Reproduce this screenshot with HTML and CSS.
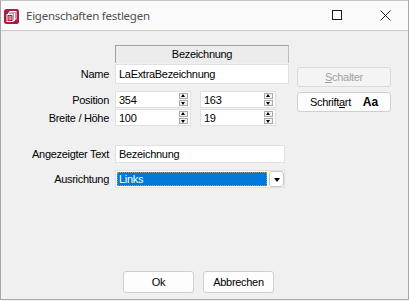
FILE: index.html
```html
<!DOCTYPE html>
<html lang="de">

<head>
    <meta charset="UTF-8">
    <meta name="viewport" content="width=device-width, initial-scale=1.0">
    <title>Eigenschaften festlegen</title>
    <link rel="stylesheet" href="styles.css">
</head>

<body>
    <div class="window">
        <div class="titlebar">
            <svg class="app-icon" width="15" height="15" viewBox="0 0 15 15">
                <rect x="0" y="0" width="15" height="15" rx="2.5" fill="#a51f45"/>
                <rect x="6" y="2.5" width="6" height="7.5" fill="none" stroke="#fff" stroke-width="1"/>
                <rect x="4.5" y="4" width="6" height="7.5" fill="#a51f45" stroke="#fff" stroke-width="1"/>
                <rect x="3" y="5.5" width="6" height="7" fill="#a51f45" stroke="#fff" stroke-width="1"/>
                <line x1="4.5" y1="8" x2="7.5" y2="8" stroke="#fff" stroke-width="1"/>
                <line x1="4.5" y1="10" x2="7.5" y2="10" stroke="#fff" stroke-width="1"/>
            </svg>
            <span class="title">Eigenschaften festlegen</span>
            <div class="caption-buttons">
                <svg class="cap-btn" width="11" height="11" viewBox="0 0 11 11">
                    <rect x="0.5" y="0.5" width="9" height="9" fill="none" stroke="#1a1a1a" stroke-width="1"/>
                </svg>
                <svg class="cap-btn" width="11" height="11" viewBox="0 0 11 11">
                    <path d="M0.5 0.5 L10.5 10.5 M10.5 0.5 L0.5 10.5" stroke="#1a1a1a" stroke-width="1"/>
                </svg>
            </div>
        </div>

        <div class="content">
            <div class="fields">
                <div class="row row-header">
                    <span class="label"></span>
                    <div class="col-header">Bezeichnung</div>
                </div>
                <div class="row row-name">
                    <span class="label">Name</span>
                    <div class="textbox wide">LaExtraBezeichnung</div>
                </div>
                <div class="row row-spin first">
                    <span class="label">Position</span>
                    <div class="spin">
                        <span class="spin-value">354</span>
                        <span class="spin-arrows"><i class="up"></i><i class="down"></i></span>
                    </div>
                    <div class="spin">
                        <span class="spin-value">163</span>
                        <span class="spin-arrows"><i class="up"></i><i class="down"></i></span>
                    </div>
                </div>
                <div class="row row-spin">
                    <span class="label">Breite / Höhe</span>
                    <div class="spin">
                        <span class="spin-value">100</span>
                        <span class="spin-arrows"><i class="up"></i><i class="down"></i></span>
                    </div>
                    <div class="spin">
                        <span class="spin-value">19</span>
                        <span class="spin-arrows"><i class="up"></i><i class="down"></i></span>
                    </div>
                </div>
                <div class="row row-text">
                    <span class="label">Angezeigter Text</span>
                    <div class="textbox narrow">Bezeichnung</div>
                </div>
                <div class="row row-combo">
                    <span class="label">Ausrichtung</span>
                    <div class="combo">
                        <span class="combo-value">Links</span>
                        <span class="combo-btn"><i></i></span>
                    </div>
                </div>
            </div>

            <div class="side">
                <button class="btn disabled"><u>S</u>chalter</button>
                <button class="btn font-btn">Schrift<u>a</u>rt <b>Aa</b></button>
            </div>
        </div>

        <div class="footer">
            <button class="btn dlg">Ok</button>
            <button class="btn dlg">Abbrechen</button>
        </div>
    </div>
</body>

</html>
```

FILE: styles.css
```css
html, body {
    margin: 0;
    padding: 0;
}

body {
    width: 409px;
    height: 301px;
    background-color: #f0f0f0;
    font-family: "Liberation Sans", Arial, sans-serif;
    font-size: 11px;
    letter-spacing: -0.3px;
    color: #000;
}

.window {
    box-sizing: border-box;
    width: 409px;
    height: 300px;
    border: 1px solid #a8a8a8;
    border-top-color: #c4c4c4;
    display: flex;
    flex-direction: column;
}

/* title bar */
.titlebar {
    height: 29px;
    background-color: #fafafa;
    border-bottom: 1px solid #c8c8c8;
    display: flex;
    align-items: center;
    flex-shrink: 0;
}

.app-icon {
    margin-left: 3px;
    margin-top: 1px;
}

.title {
    margin-left: 7px;
    font-family: "Noto Sans", "Open Sans", sans-serif;
    font-size: 11.5px;
    letter-spacing: -0.25px;
    color: #505050;
}

.caption-buttons {
    margin-left: auto;
    display: flex;
    align-items: center;
    gap: 37px;
    margin-right: 17px;
}

/* form area */
.content {
    display: flex;
    padding: 14px 0 0 8px;
}

.fields {
    display: flex;
    flex-direction: column;
}

.row {
    display: flex;
    align-items: center;
}

.label {
    width: 100px;
    margin-right: 6px;
    text-align: right;
    white-space: nowrap;
}

.col-header {
    box-sizing: border-box;
    width: 174px;
    height: 18px;
    background-color: #ececec;
    border: 1px solid #a0a0a0;
    border-bottom: none;
    border-right-color: #bdbdbd;
    text-align: center;
    line-height: 17px;
}

.textbox {
    box-sizing: border-box;
    background-color: #fff;
    border: 1px solid #e0e0e0;
    padding-left: 3px;
    white-space: nowrap;
}

.row-name {
    margin-top: 1px;
}

.textbox.wide {
    width: 174px;
    height: 20px;
    line-height: 18px;
}

.row-spin {
    margin-top: 1px;
}

.row-spin.first {
    margin-top: 7px;
}

.spin {
    box-sizing: border-box;
    width: 76px;
    height: 17px;
    background-color: #fff;
    border: 1px solid #e0e0e0;
    display: flex;
    align-items: center;
    padding-left: 3px;
    margin-right: 9px;
}

.spin-value {
    flex: 1;
}

.spin-arrows {
    display: flex;
    flex-direction: column;
    gap: 1px;
    margin-right: 2px;
}

.spin-arrows i {
    box-sizing: border-box;
    width: 9px;
    height: 6px;
    background-color: #f4f4f4;
    border: 1px solid #a9a9a9;
    position: relative;
}

.spin-arrows i::after {
    content: "";
    position: absolute;
    left: 1px;
    border-left: 2.5px solid transparent;
    border-right: 2.5px solid transparent;
}

.spin-arrows .up::after {
    top: 0;
    border-bottom: 3px solid #000;
}

.spin-arrows .down::after {
    top: 1px;
    border-top: 3px solid #000;
}

.row-text {
    margin-top: 19px;
}

.textbox.narrow {
    width: 170px;
    height: 18px;
    line-height: 16px;
}

.row-combo {
    margin-top: 7px;
}

.combo {
    box-sizing: border-box;
    width: 170px;
    height: 18px;
    background-color: #fff;
    border: 1px solid #e0e0e0;
    display: flex;
    align-items: stretch;
}

.combo-value {
    flex: 1;
    margin: 1px;
    background-color: #0078d7;
    color: #fff;
    outline: 1px dotted #e08a1e;
    outline-offset: -1px;
    padding-left: 2px;
    line-height: 14px;
}

.combo-btn {
    box-sizing: border-box;
    width: 15px;
    margin-left: 1px;
    background-color: #fff;
    border: 1px solid #c8c8c8;
    border-radius: 3px;
    display: flex;
    align-items: center;
    justify-content: center;
}

.combo-btn i {
    border-left: 3.5px solid transparent;
    border-right: 3.5px solid transparent;
    border-top: 4px solid #000;
    margin-top: 1px;
}

/* buttons */
.btn {
    box-sizing: border-box;
    font-family: "Liberation Sans", Arial, sans-serif;
    font-size: 11px;
    letter-spacing: -0.3px;
    color: #000;
    background-color: #fdfdfd;
    border: 1px solid #cfcfcf;
    border-radius: 3px;
    padding: 0;
    height: 20px;
}

.side {
    display: flex;
    flex-direction: column;
    gap: 5px;
    margin-left: 8px;
    margin-top: 22px;
}

.side .btn {
    width: 94px;
}

.btn.disabled {
    color: #a2a2a2;
    background-color: #f4f4f4;
    border-color: #dadada;
}

.font-btn b {
    margin-left: 9px;
    font-size: 12px;
    letter-spacing: 0;
}

.footer {
    margin-top: auto;
    display: flex;
    gap: 9px;
    padding: 0 0 6px 122px;
}

.btn.dlg {
    width: 71px;
    height: 22px;
}
```
